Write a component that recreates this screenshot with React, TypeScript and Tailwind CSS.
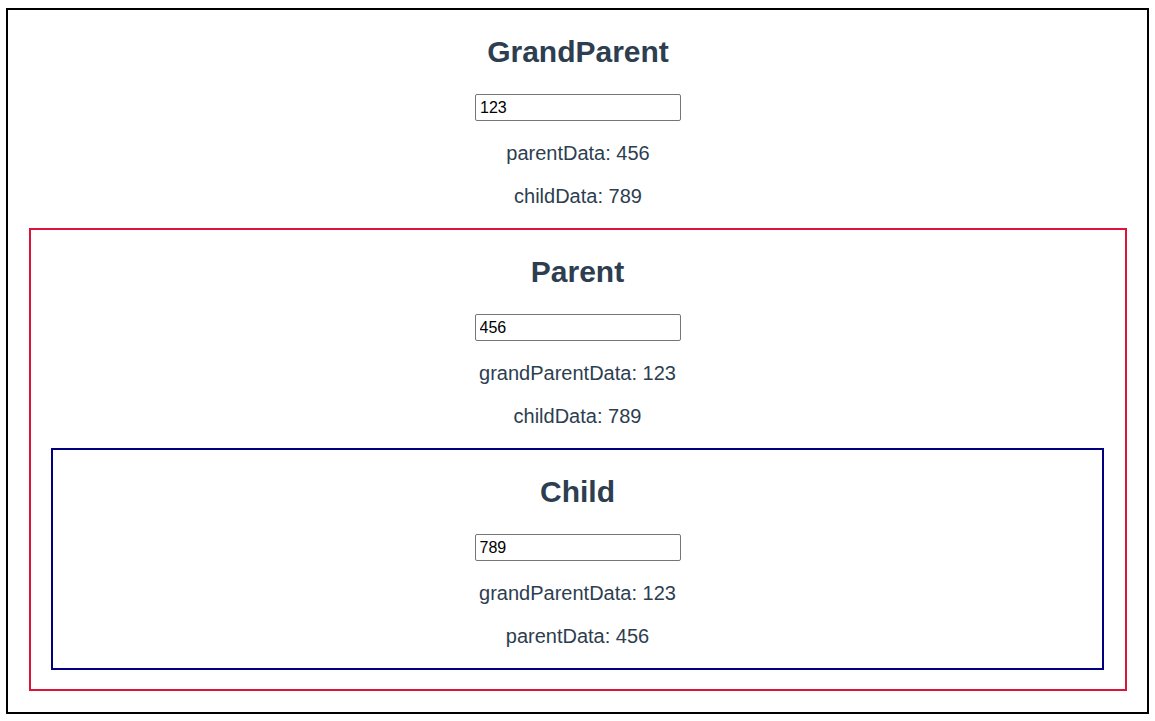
import React, { useState } from 'react';

interface BoxProps {
  title: string;
  value: string;
  onChange: (v: string) => void;
  lines: { label: string; value: string }[];
  borderClass: string;
  padClass: string;
  children?: React.ReactNode;
}

const Box: React.FC<BoxProps> = ({ title, value, onChange, lines, borderClass, padClass, children }) => {
  return (
    <div className={`border-2 ${borderClass} ${padClass} flex flex-col items-stretch`}>
      <h2 className="text-[30px] leading-[34px] font-bold text-center text-[#2c3e50] mt-[25px] mb-[25px]">{title}</h2>
      <div className="flex justify-center">
        <input
          value={value}
          onChange={(e) => onChange(e.target.value)}
          className="w-[206px] h-[27px] border border-[#767676] rounded-[2px] px-[4px] text-[16px] text-black outline-none bg-white"
        />
      </div>
      <p className="text-[20px] leading-[23px] text-center text-[#2c3e50] mt-[21px]">
        {lines[0].label}: {lines[0].value}
      </p>
      <p className="text-[20px] leading-[23px] text-center text-[#2c3e50] mt-[20px] mb-[20px]">
        {lines[1].label}: {lines[1].value}
      </p>
      {children}
    </div>
  );
};

export default function App() {
  const [grandParentData, setGrandParentData] = useState('123');
  const [parentData, setParentData] = useState('456');
  const [childData, setChildData] = useState('789');

  return (
    <div className="w-[1155px] h-[721px] bg-white pt-[8px] pl-[6px]" style={{ fontFamily: '"Liberation Sans", Arial, sans-serif' }}>
      <div className="w-[1143px]">
        <Box
          title="GrandParent"
          value={grandParentData}
          onChange={setGrandParentData}
          lines={[
            { label: 'parentData', value: parentData },
            { label: 'childData', value: childData },
          ]}
          borderClass="border-black"
          padClass="pl-[21px] pr-[20px] pb-[21px]"
        >
          <Box
            title="Parent"
            value={parentData}
            onChange={setParentData}
            lines={[
              { label: 'grandParentData', value: grandParentData },
              { label: 'childData', value: childData },
            ]}
            borderClass="border-[#dc143c]"
            padClass="pl-[20px] pr-[21px] pb-[19px]"
          >
            <Box
              title="Child"
              value={childData}
              onChange={setChildData}
              lines={[
                { label: 'grandParentData', value: grandParentData },
                { label: 'parentData', value: parentData },
              ]}
              borderClass="border-[#000080]"
              padClass="px-[20px]"
            />
          </Box>
        </Box>
      </div>
    </div>
  );
}
